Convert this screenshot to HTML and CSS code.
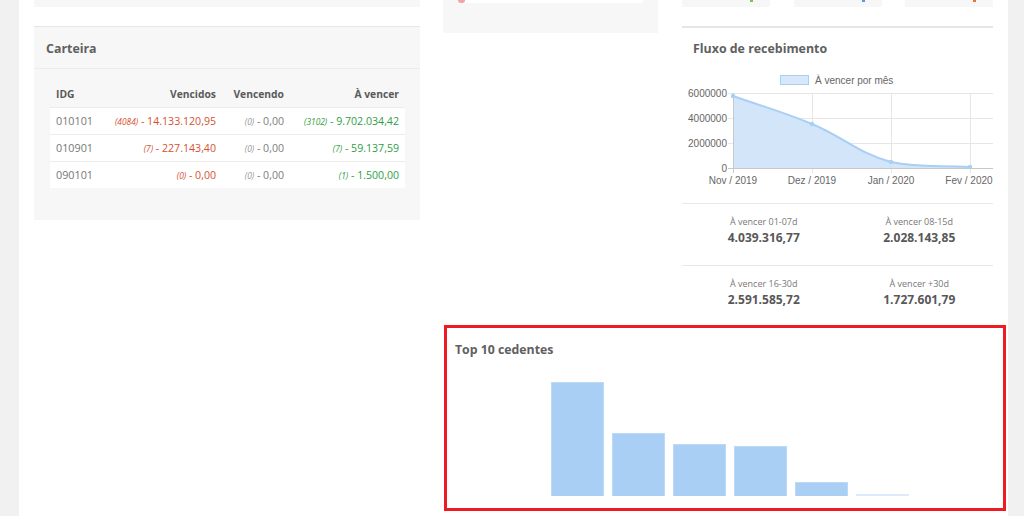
FILE: index.html
```html
<!DOCTYPE html>
<html lang="pt-BR">
<head>
<meta charset="utf-8">
<title>Dashboard</title>
<link rel="stylesheet" href="styles.css">
</head>
<body>
<div class="page">
  <div class="gutter gutter-left"></div>
  <main class="main">
    <section class="col col-1">
      <div class="frag frag-1"></div>
      <div class="panel panel-gray carteira">
        <div class="panel-head"><h3>Carteira</h3></div>
        <div class="panel-body">
          <table class="tbl">
            <colgroup><col class="c1"><col class="c2"><col class="c3"><col class="c4"></colgroup>
            <thead>
              <tr><th class="l">IDG</th><th>Vencidos</th><th>Vencendo</th><th>À vencer</th></tr>
            </thead>
            <tbody>
              <tr><td class="l">010101</td><td class="red"><i>(4084)</i> - 14.133.120,95</td><td class="gray"><i>(0)</i> - 0,00</td><td class="green"><i>(3102)</i> - 9.702.034,42</td></tr>
              <tr><td class="l">010901</td><td class="red"><i>(7)</i> - 227.143,40</td><td class="gray"><i>(0)</i> - 0,00</td><td class="green"><i>(7)</i> - 59.137,59</td></tr>
              <tr><td class="l">090101</td><td class="red"><i>(0)</i> - 0,00</td><td class="gray"><i>(0)</i> - 0,00</td><td class="green"><i>(1)</i> - 1.500,00</td></tr>
            </tbody>
          </table>
        </div>
      </div>
    </section>

    <section class="right">
      <div class="right-top">
        <div class="col col-2">
          <div class="frag frag-2">
            <span class="track-dot"></span><span class="track"></span>
          </div>
        </div>
        <div class="col col-3">
          <div class="minis">
            <div class="mini"><span class="mark green-bg"></span></div>
            <div class="mini"><span class="mark blue-bg"></span></div>
            <div class="mini"><span class="mark orange-bg"></span></div>
          </div>
          <div class="panel fluxo">
            <div class="panel-head"><h3>Fluxo de recebimento</h3></div>
            <svg class="chart" width="311" height="124" viewBox="0 0 311 124" xmlns="http://www.w3.org/2000/svg">
              <rect x="98.5" y="7.5" width="28" height="9" fill="#d6e8fa" stroke="#a9cff4" stroke-width="1"/>
              <text x="133" y="15.5" class="lg">À vencer por mês</text>
              <g stroke="#e6e6e6" stroke-width="1">
                <line x1="46" y1="25.5" x2="311" y2="25.5"/>
                <line x1="46" y1="50.5" x2="311" y2="50.5"/>
                <line x1="46" y1="75.5" x2="311" y2="75.5"/>
                <line x1="130.5" y1="25" x2="130.5" y2="105"/>
                <line x1="209.5" y1="25" x2="209.5" y2="105"/>
                <line x1="288.5" y1="25" x2="288.5" y2="105"/>
              </g>
              <path d="M51,28 C82.6,39.2 99.1,43.1 130,56 C162.3,69.5 175.8,85 209,94 C239,100 256.4,97 288,99 L288,100 L51,100 Z" fill="#d3e5f8"/>
              <path d="M51,28 C82.6,39.2 99.1,43.1 130,56 C162.3,69.5 175.8,85 209,94 C239,100 256.4,97 288,99" fill="none" stroke="#a9cff4" stroke-width="2"/>
              <g stroke="#c8c8c8" stroke-width="1">
                <line x1="46" y1="100.5" x2="311" y2="100.5"/>
                <line x1="51.5" y1="25" x2="51.5" y2="105"/>
              </g>
              <g fill="#a9cff4">
                <circle cx="51" cy="28" r="2.2"/>
                <circle cx="130" cy="56" r="2.2"/>
                <circle cx="209" cy="94" r="2.2"/>
                <circle cx="288" cy="99" r="2.2"/>
              </g>
              <g class="ax" text-anchor="end">
                <text x="45" y="29">6000000</text>
                <text x="45" y="54">4000000</text>
                <text x="45" y="79">2000000</text>
                <text x="45" y="104">0</text>
              </g>
              <g class="ax" text-anchor="middle">
                <text x="51" y="116">Nov / 2019</text>
                <text x="130" y="116">Dez / 2019</text>
                <text x="209" y="116">Jan / 2020</text>
                <text x="287" y="116">Fev / 2020</text>
              </g>
            </svg>
            <div class="stats">
              <div class="stat-row">
                <div class="stat"><span class="st-label">À vencer 01-07d</span><span class="st-value">4.039.316,77</span></div>
                <div class="stat"><span class="st-label">À vencer 08-15d</span><span class="st-value">2.028.143,85</span></div>
              </div>
              <div class="stat-row last">
                <div class="stat"><span class="st-label">À vencer 16-30d</span><span class="st-value">2.591.585,72</span></div>
                <div class="stat"><span class="st-label">À vencer +30d</span><span class="st-value">1.727.601,79</span></div>
              </div>
            </div>
          </div>
        </div>
      </div>

      <div class="top10">
        <div class="top10-head"><h3>Top 10 cedentes</h3></div>
        <div class="bars">
          <div class="bar" style="height:114px"></div>
          <div class="bar" style="height:63px"></div>
          <div class="bar" style="height:52px"></div>
          <div class="bar" style="height:50px"></div>
          <div class="bar" style="height:14px"></div>
          <div class="bar bar-faint" style="height:2px"></div>
        </div>
      </div>
    </section>
  </main>
  <div class="gutter gutter-right"></div>
</div>
</body>
</html>
```

FILE: styles.css
```css
* { box-sizing: border-box; }
html, body { margin: 0; padding: 0; }
body {
  background: #f1f1f1;
  font-family: "Open Sans", "Liberation Sans", sans-serif;
  color: #555;
  height: 516px;
  overflow: hidden;
}
.page { display: flex; height: 516px; }
.gutter-left { width: 19px; flex: none; background: #f1f1f1; }
.gutter-right { flex: 1; background: #f1f1f1; }
.main {
  width: 989px;
  flex: none;
  background: #fff;
  display: flex;
  align-items: flex-start;
  padding-left: 15px;
}
.col-1 { width: 386px; flex: none; }
.frag-1 { height: 7px; background: #f7f7f7; }

.panel-gray { background: #f7f7f7; }
.carteira {
  margin-top: 19px;
  height: 194px;
  border-top: 1px solid #e6e6e6;
}
.panel-head {
  height: 42px;
  display: flex;
  align-items: center;
  padding: 2px 0 0 12px;
  border-bottom: 1px solid #ececec;
}
.panel-head h3 {
  margin: 0;
  font-size: 12.4px;
  font-weight: 700;
  color: #606060;
  line-height: 20px;
}
.carteira .panel-body { padding: 12px 15px 0 16px; }
.tbl { width: 355px; border-collapse: collapse; table-layout: fixed; font-size: 10.6px; }
.tbl .c1 { width: 56px; }
.tbl .c2 { width: 116px; }
.tbl .c3 { width: 68px; }
.tbl .c4 { width: 115px; }
.tbl th {
  height: 26px;
  text-align: right;
  font-weight: 700;
  color: #5a5a5a;
  padding: 0 6px;
  font-size: 10.3px;
}
.tbl td {
  height: 27px;
  background: #fff;
  text-align: right;
  padding: 0 6px;
  border-top: 1px solid #ececec;
  white-space: nowrap;
  color: #777;
}
.tbl td.l { font-size: 10.8px; }
.tbl .l { text-align: left; }
.tbl i { font-size: 8.4px; }
.tbl .red { color: #d4512f; }
.tbl .gray { color: #7d7d7d; }
.tbl .gray i { color: #999; }
.tbl .green { color: #2f9e44; }

.right { margin-left: 23px; width: 565px; flex: none; }
.right-top { display: flex; align-items: flex-start; }
.col-2 { width: 215px; flex: none; }
.frag-2 {
  height: 33px;
  background: #f7f7f7;
  display: flex;
  align-items: flex-start;
  padding-left: 15px;
  padding-right: 15px;
}
.track-dot { width: 7px; height: 3px; background: #f4a3a3; border-radius: 0 0 3px 3px; flex: none; }
.track { flex: 1; height: 3px; background: #fff; }

.col-3 { width: 311px; flex: none; margin-left: 24px; }
.minis { display: flex; justify-content: space-between; height: 7px; }
.mini {
  width: 88px;
  height: 7px;
  background: #f7f7f7;
  position: relative;
}
.mark { position: absolute; top: 0; right: 17px; width: 3px; height: 2px; }
.green-bg { background: #7cc450; }
.blue-bg { background: #5a9be0; }
.orange-bg { background: #e2743c; }

.fluxo {
  margin-top: 19px;
  background: #fff;
  border-top: 2px solid #e6e6e6;
}
.fluxo .panel-head { border-bottom: none; height: 40px; padding-left: 11px; }
.chart { display: block; }
.chart text { font-family: "Liberation Sans", Arial, sans-serif; }
.chart .lg { font-size: 10px; fill: #666; }
.chart .ax { font-size: 10px; fill: #666; }

.stats { margin-top: 11px; }
.stat-row {
  display: flex;
  border-top: 1px solid #e8e8e8;
  height: 62px;
  padding-top: 11px;
}
.stat-row.last { height: 55px; }
.stat {
  width: 50%;
  display: flex;
  flex-direction: column;
  align-items: center;
  padding-left: 8px;
}
.st-label { font-size: 9px; color: #777; line-height: 14px; }
.st-value { font-size: 12px; font-weight: 700; color: #585858; line-height: 18px; }

.top10 {
  margin-top: 5px;
  margin-left: 1px;
  width: 562px;
  height: 186px;
  border: 3px solid #ed1c24;
  background: #fff;
}
.top10-head { padding: 12px 0 0 8px; height: 32px; }
.top10-head h3 {
  margin: 0;
  font-size: 12.3px;
  font-weight: 700;
  color: #606060;
  line-height: 20px;
}
.bars {
  display: flex;
  align-items: flex-end;
  gap: 8px;
  height: 136px;
  padding-left: 104px;
}
.bar {
  width: 53px;
  background: #aacff4;
  border: 1px solid #bcd9f6;
  border-bottom: none;
}
.bar-faint { background: #dceafb; border: none; }
```
